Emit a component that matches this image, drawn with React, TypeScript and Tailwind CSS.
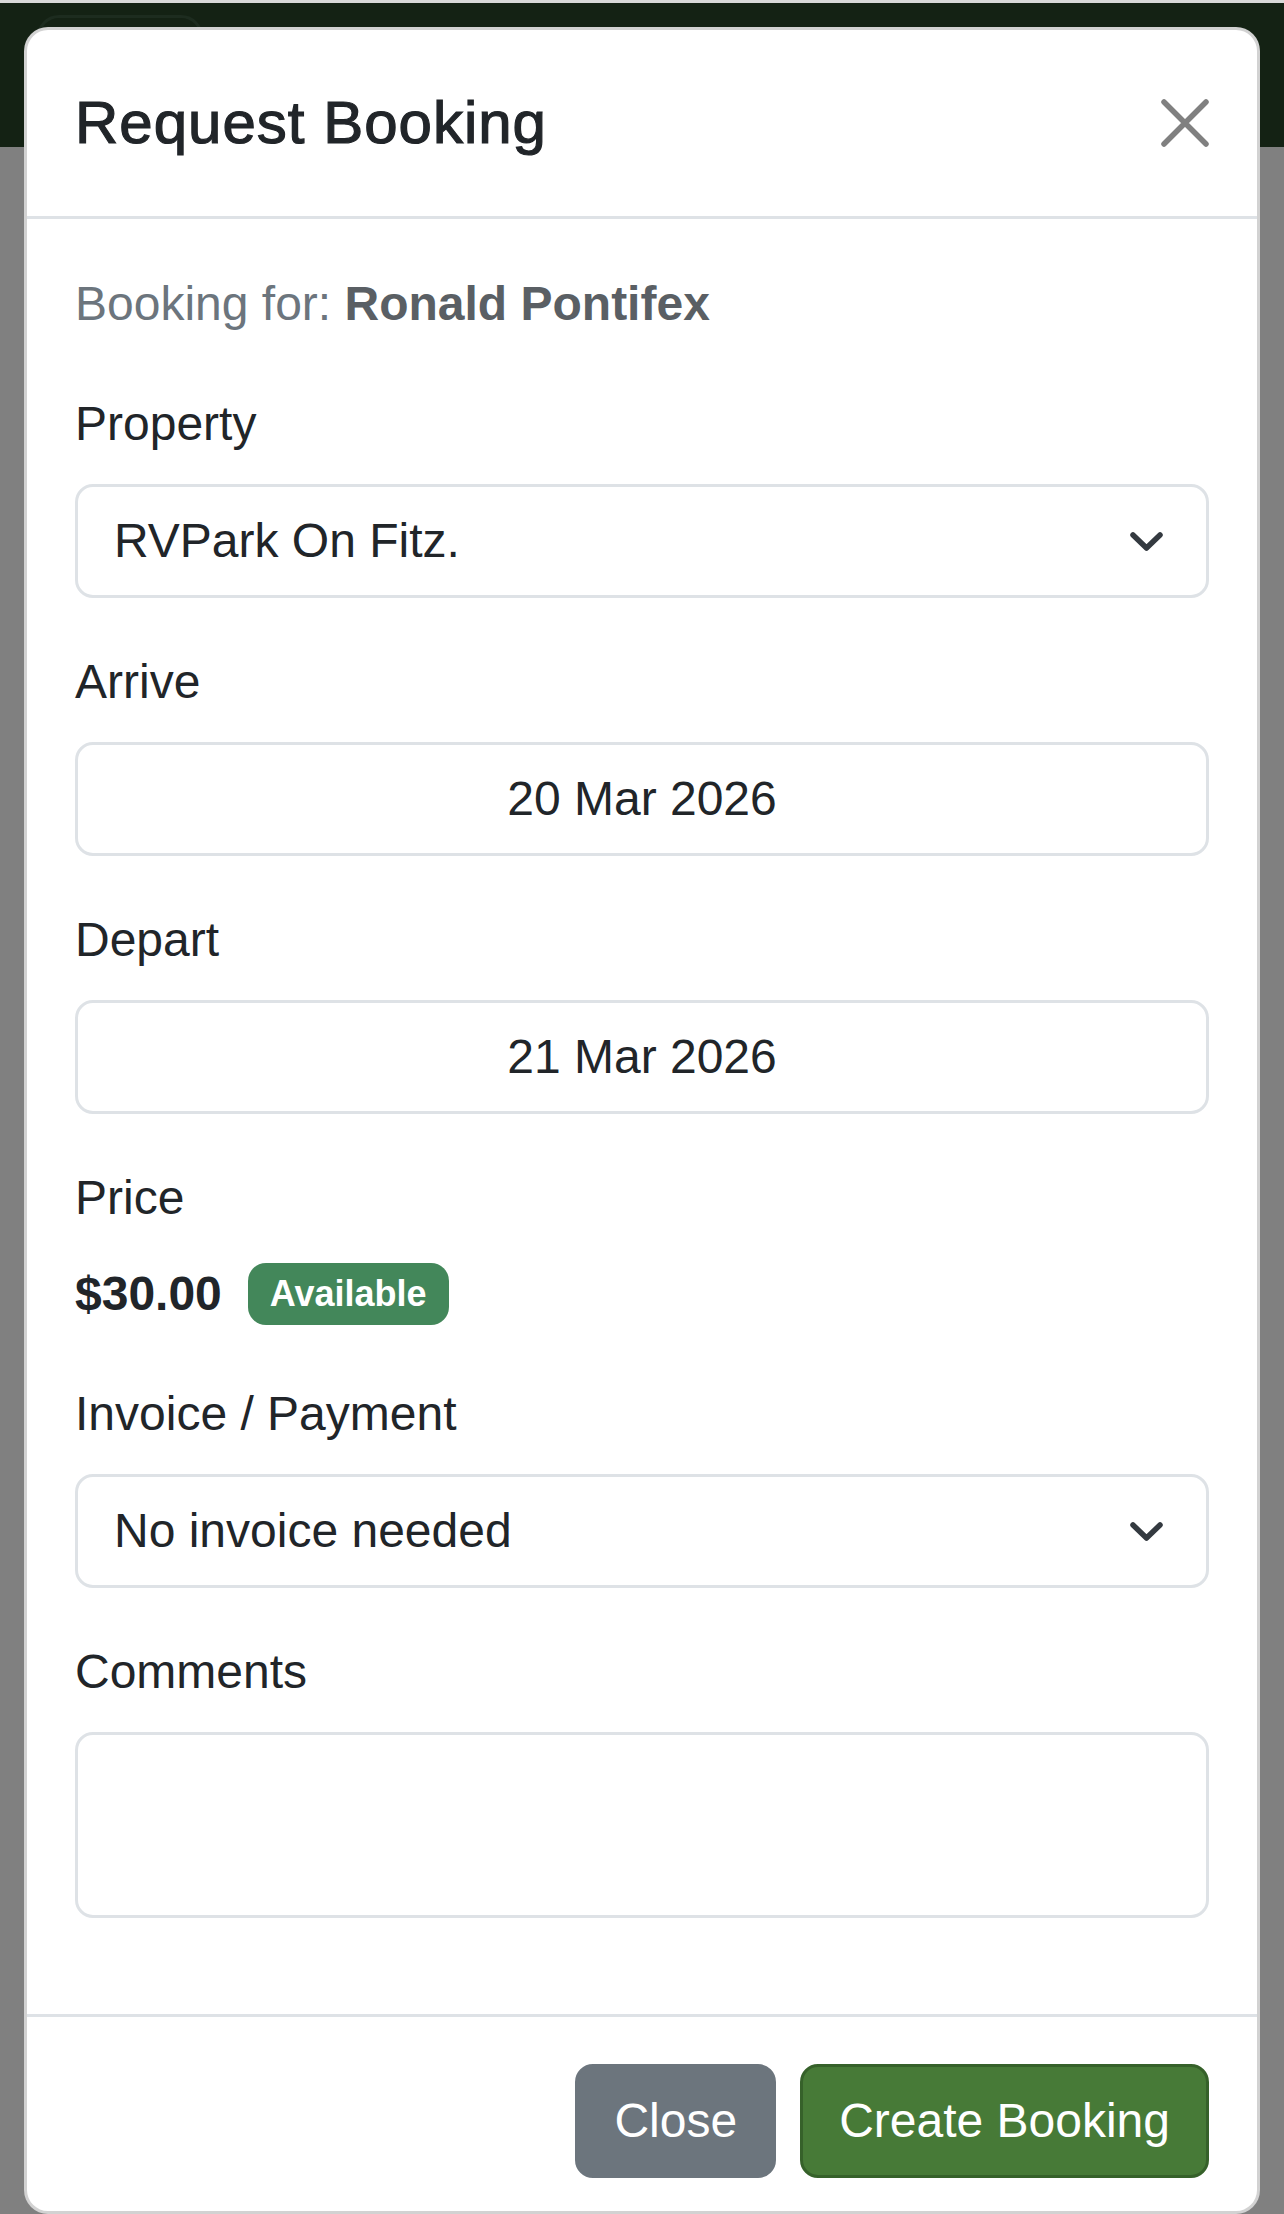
import React from "react"

const font = { fontFamily: '"Liberation Sans", Arial, Helvetica, sans-serif' }

function Chevron() {
  return (
    <svg width="33" height="19" viewBox="0 0 33 19" fill="none" className="shrink-0">
      <path d="M3 3 16.5 16 30 3" stroke="#343a40" strokeWidth="5.5" strokeLinecap="round" strokeLinejoin="round" />
    </svg>
  )
}

function CloseIcon() {
  return (
    <svg width="48" height="48" viewBox="0 0 48 48" fill="none">
      <path d="M3 3 45 45M45 3 3 45" stroke="#808080" strokeWidth="5.5" strokeLinecap="round" />
    </svg>
  )
}

function Label({ children }: { children: React.ReactNode }) {
  return <div className="mb-[24px] text-[48px] leading-[72px] text-[#212529]">{children}</div>
}

function SelectBox({ value }: { value: string }) {
  return (
    <div className="mb-[48px] flex h-[114px] items-center justify-between rounded-[18px] border-[3px] border-[#dee2e6] bg-white pl-[36px] pr-[43px]">
      <span className="text-[48px] leading-[72px] text-[#212529]">{value}</span>
      <Chevron />
    </div>
  )
}

function DateBox({ value }: { value: string }) {
  return (
    <div className="mb-[48px] flex h-[114px] items-center justify-center rounded-[18px] border-[3px] border-[#dee2e6] bg-white">
      <span className="text-[48px] leading-[72px] text-[#212529]">{value}</span>
    </div>
  )
}

export default function App() {
  return (
    <div className="relative h-[2214px] w-[1284px] overflow-hidden bg-[#808080]" style={font}>
      {/* page behind the backdrop */}
      <div className="h-[3px] bg-[#d9d9d9]" />
      <div className="h-[144px] bg-[#142214] pl-[37px] pt-[12px]">
        <div className="h-[120px] w-[166px] rounded-[22px] border-[3px] border-[#1d2c1f]" />
      </div>

      {/* modal */}
      <div className="absolute left-[24px] top-[27px] flex h-[2187px] w-[1236px] flex-col overflow-hidden rounded-[24px] border-[3px] border-black/[0.175] bg-white">
        <div className="flex items-center justify-between border-b-[3px] border-[#dee2e6] px-[48px] py-[48px]">
          <h5 className="text-[60px] font-medium leading-[90px] tracking-[1px] text-[#212529] [-webkit-text-stroke:1.2px_#212529]">
            Request Booking
          </h5>
          <button className="flex h-[48px] w-[48px] items-center justify-center">
            <CloseIcon />
          </button>
        </div>

        <div className="px-[48px] pb-[48px] pt-[49px]">
          <p className="mb-[48px] text-[48px] leading-[72px] text-[#6c757d]">
            Booking for: <strong className="font-bold text-[#5a5f64]">Ronald Pontifex</strong>
          </p>

          <Label>Property</Label>
          <SelectBox value="RVPark On Fitz." />

          <Label>Arrive</Label>
          <DateBox value="20 Mar 2026" />

          <Label>Depart</Label>
          <DateBox value="21 Mar 2026" />

          <Label>Price</Label>
          <div className="mb-[48px] flex h-[72px] items-center gap-[26px]">
            <span className="text-[48px] font-bold leading-[72px] text-[#212529]">$30.00</span>
            <span className="rounded-[18px] bg-[#43875a] px-[22px] py-[13px] text-[36px] font-bold leading-[36px] text-white">
              Available
            </span>
          </div>

          <Label>Invoice / Payment</Label>
          <SelectBox value="No invoice needed" />

          <Label>Comments</Label>
          <div className="mb-[48px] h-[186px] rounded-[18px] border-[3px] border-[#dee2e6] bg-white" />
        </div>

        <div className="flex items-center justify-end gap-[24px] border-t-[3px] border-[#dee2e6] px-[48px] pt-[47px]">
          <button className="h-[114px] rounded-[18px] border-[3px] border-[#6c757d] bg-[#6c757d] px-[36px] text-[48px] leading-[72px] text-white">
            Close
          </button>
          <button className="h-[114px] rounded-[18px] border-[3px] border-[#36612a] bg-[#477a37] px-[36px] text-[48px] leading-[72px] text-white">
            Create Booking
          </button>
        </div>
      </div>
    </div>
  )
}
